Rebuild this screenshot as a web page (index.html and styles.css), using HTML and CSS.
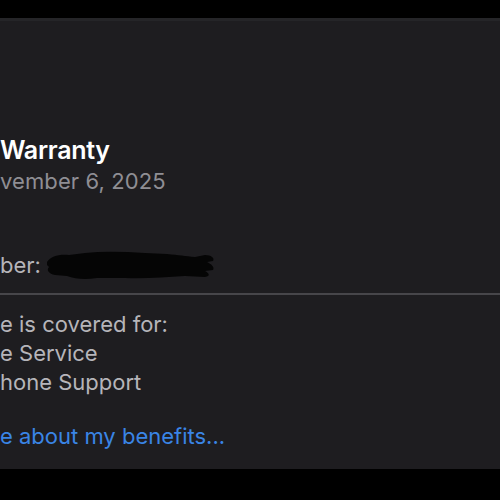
FILE: index.html
```html
<!DOCTYPE html>
<html lang="en">
<head>
    <meta charset="UTF-8">
    <meta name="viewport" content="width=device-width, initial-scale=1.0">
    <title>Coverage</title>
    <link rel="stylesheet" href="styles.css">
</head>
<body>
    <div class="topbar"></div>
    <div class="panel">
        <div class="header">
            <div class="title">Warranty</div>
            <div class="date">vember 6, 2025</div>
        </div>
        <div class="serial">
            <span class="label">ber:</span>
            <svg class="redact" width="172" height="34" viewBox="0 0 172 34">
                <path d="M2 14 C6 8 14 6 24 7 L40 5 C60 3 80 4 100 5 L122 6 C134 7 140 8 150 9 L160 7 C166 7 170 10 168 13 L162 14 C166 16 170 19 168 22 L160 23 C164 25 166 28 160 29 L140 28 C120 29 100 31 80 30 L52 30 C40 32 30 31 22 28 L10 27 C4 26 1 22 4 19 L2 17 Z" fill="#050505"/>
            </svg>
        </div>
        <div class="divider"></div>
        <div class="coverage">
            <div class="line">e is covered for:</div>
            <div class="line">e Service</div>
            <div class="line">hone Support</div>
        </div>
        <div class="link">e about my benefits...</div>
    </div>
</body>
</html>
```

FILE: styles.css
```css
body{
    margin: 0;
    background: #000;
    font-family: Inter, "Noto Sans", sans-serif;
    overflow: hidden;
}
.topbar{
    height: 18px;
    background: #000;
}
.panel{
    height: 448px;
    background: #1e1d20;
    border-top: 3px solid #252528;
    overflow: hidden;
}
.header{
    padding-top: 113px;
}
.title{
    font-size: 25px;
    font-weight: 600;
    letter-spacing: -0.3px;
    line-height: 32px;
    color: #fff;
}
.date{
    font-size: 22px;
    letter-spacing: 0.1px;
    line-height: 28px;
    color: #8f8e94;
    margin-top: 1px;
}
.serial{
    display: flex;
    align-items: center;
    margin-top: 53px;
    height: 34px;
}
.label{
    font-size: 22px;
    color: #b6b5ba;
    margin-right: 4px;
}
.redact{
    display: block;
}
.divider{
    height: 2px;
    background: #47464a;
    margin-top: 11px;
}
.coverage{
    margin-top: 15px;
}
.line{
    font-size: 22px;
    line-height: 29px;
    color: #b6b5ba;
}
.link{
    font-size: 22px;
    line-height: 28px;
    color: #3a85e6;
    margin-top: 25px;
}
```
